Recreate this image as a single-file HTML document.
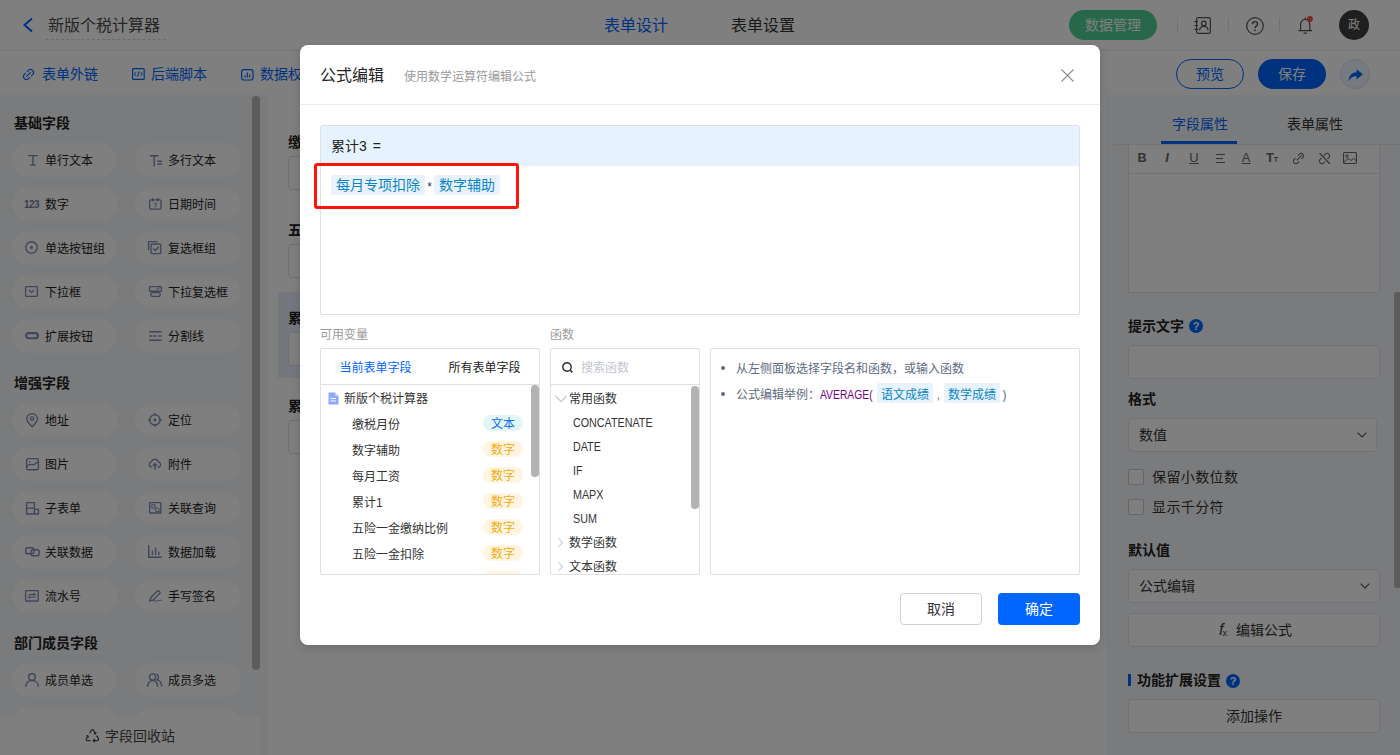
<!DOCTYPE html>
<html lang="zh-CN">
<head>
<meta charset="utf-8">
<title>公式编辑</title>
<style>
*{box-sizing:border-box;margin:0;padding:0}
html,body{width:1400px;height:755px;overflow:hidden}
body{font-family:"Liberation Sans","Noto Sans CJK SC",sans-serif;font-size:14px;color:#333;background:#fff;position:relative;line-height:1}
.abs{position:absolute}
svg{display:block;overflow:visible}
/* ---------- header ---------- */
.hdr{position:absolute;left:0;top:0;width:1400px;height:51px;background:#fff;border-bottom:1px solid #f0f0f0}
.hdr .title{position:absolute;left:48px;top:16px;font-size:16px;line-height:20px;color:#4a4a4a;white-space:nowrap}
.hdr .title-line{position:absolute;left:46px;top:39px;width:120px;border-top:1px dashed #d9d9d9}
.hdr .tab{position:absolute;top:16px;font-size:16px;line-height:20px;white-space:nowrap}
.hdr .dm{position:absolute;left:1069px;top:10px;width:88px;height:30px;border-radius:15px;background:#4cd093;color:#fff;font-size:14px;line-height:30px;text-align:center}
.hdr .sep{position:absolute;top:18px;width:1px;height:14px;background:#e4e4e4}
.hdr .ava{position:absolute;left:1339px;top:10px;width:30px;height:30px;border-radius:50%;background:#3f3f3f;color:#fff;font-size:12px;line-height:30px;text-align:center}
/* ---------- toolbar ---------- */
.tb{position:absolute;left:0;top:51px;width:1400px;height:44px;background:#fff;box-shadow:0 1px 4px rgba(0,0,0,.08)}
.tb .it{position:absolute;top:14px;font-size:14px;line-height:18px;color:#0066ff;white-space:nowrap}
.tb .ic{position:absolute;top:17px}
.tb .pv{position:absolute;left:1176px;top:8px;width:68px;height:30px;border:1px solid #0066ff;border-radius:15px;color:#0066ff;font-size:14px;line-height:28px;text-align:center}
.tb .sv{position:absolute;left:1258px;top:8px;width:68px;height:30px;border-radius:15px;background:#0066ff;color:#fff;font-size:14px;line-height:30px;text-align:center}
.tb .sh{position:absolute;left:1340px;top:8px;width:30px;height:30px;border-radius:50%;background:#eef4ff;border:1px solid #d4e0fb}
/* ---------- left panel ---------- */
.left{position:absolute;left:0;top:95px;width:268px;height:660px;background:#f5f6f8;overflow:hidden}
.left h4{position:absolute;left:14px;font-size:14px;line-height:18px;font-weight:bold;color:#222}
.pill{position:absolute;width:105px;height:34px;border-radius:17px;background:#fff;font-size:12px;line-height:34px;color:#1c1c1c;white-space:nowrap}
.pill span{position:absolute;left:33px;top:1px}
.pill svg{position:absolute}
.n123{position:absolute;left:12px;top:12.5px;font-style:normal;font-weight:bold;font-size:10px;line-height:10px;color:#6f7da6;letter-spacing:-.5px}
.c1{left:12px}.c2{left:135px}
.lsb{position:absolute;left:252px;top:1px;width:8px;height:574px;border-radius:4px;background:#b9b9b9}
.recycle{position:absolute;left:0;top:622px;width:260px;height:38px;background:#fff;font-size:14px;color:#444}
/* ---------- canvas ---------- */
.cv{position:absolute;left:268px;top:95px;width:838px;height:660px;background:#fff}
.fld{position:absolute;left:10px;width:780px;height:88px}
.fld b{font-weight:bold;position:absolute;left:10px;top:11px;font-size:14px;line-height:18px;color:#222}
.fld i{position:absolute;left:10px;top:34px;width:760px;height:34px;border:1px solid #dcdfe6;border-radius:4px;background:#fff}
/* ---------- right panel ---------- */
.rp{position:absolute;left:1106px;top:95px;width:294px;height:660px;background:#f5f6f8;overflow:hidden}
.rp .lbl{position:absolute;left:22px;font-size:14px;line-height:18px;font-weight:bold;color:#222;white-space:nowrap}
.rp .box{position:absolute;left:22px;width:252px;background:#fff;border:1px solid #e3e5ea;border-radius:4px;font-size:14px;color:#333}
.rp .q{position:absolute;width:14px;height:14px;border-radius:50%;background:#0066ff;color:#fff;font-size:11px;font-weight:bold;line-height:14px;text-align:center}
.rp .cb{position:absolute;left:22px;width:16px;height:16px;border:1px solid #c8cbd2;border-radius:2px;background:#fff}
.rp .cbl{position:absolute;left:46px;font-size:14px;line-height:18px;color:#333;white-space:nowrap;letter-spacing:.4px}
/* ---------- mask & modal ---------- */
.mask{position:absolute;left:0;top:0;width:1400px;height:755px;background:rgba(0,0,0,.5)}
.modal{position:absolute;left:300px;top:45px;width:800px;height:600px;background:#fff;border-radius:8px;overflow:hidden;box-shadow:0 3px 10px rgba(0,0,0,.16)}
.modal .mh{position:absolute;left:0;top:0;width:800px;height:60px;border-bottom:1px solid #ebebeb}
.modal .mh .t{position:absolute;left:20px;top:21px;font-size:16px;line-height:20px;color:#222}
.modal .mh .s{position:absolute;left:104px;top:24px;font-size:12px;line-height:16px;color:#9a9a9a}
.ed{position:absolute;left:20px;top:80px;width:760px;height:190px;border:1px solid #e0e0e0;border-radius:2px}
.ed .eh{position:absolute;left:0;top:0;width:758px;height:40px;background:#e6f3fe;font-size:14px;line-height:40px;padding-left:10px;color:#222}
.chip{display:inline-block;background:#e8f3fd;color:#0a86c8;border-radius:2px;padding:0 4px;height:20px;line-height:20px}
.red{position:absolute;left:14px;top:118px;width:205px;height:46px;border:3px solid #ff140a;border-radius:3px}
.sl{position:absolute;top:282px;font-size:12px;line-height:16px;color:#9a9a9a}
.bx{position:absolute;top:303px;height:227px;border:1px solid #e0e0e0;border-radius:2px;overflow:hidden;font-size:12px;color:#333}
.row{position:absolute;left:0;white-space:nowrap;line-height:16px}
.tag{position:absolute;left:162px;width:40px;height:16px;border-radius:8px;font-size:12px;line-height:18px;text-align:center;overflow:hidden}
.tn{background:#fff5e0;color:#f5ab12}
.tt{background:#e2f6f7;color:#1470e8}
.sb{position:absolute;width:8px;border-radius:4px;background:#b3b3b3}
.btn{position:absolute;top:548px;width:82px;height:32px;border-radius:4px;font-size:14px;line-height:30px;text-align:center}

.fl{position:absolute;left:10px;top:49px;height:20px;line-height:20px;font-size:14px;white-space:nowrap}
.fl .chip{padding:0 5px}
.op{position:relative;top:1px;display:inline-block;width:9px;text-align:center;font-size:12px;color:#333;font-family:"Liberation Mono",monospace}
.vt{position:absolute;left:0;top:0;width:218px;height:36px;border-bottom:1px solid #e0e0e0}
.vt span{position:absolute;top:1px;width:109px;text-align:center;line-height:36px;font-size:12px;color:#222}
.fs{position:absolute;left:0;top:0;width:148px;height:36px;border-bottom:1px solid #e0e0e0}
.fs span{position:absolute;left:30px;top:11px;font-size:12px;line-height:16px;color:#c3c7ce}
.fn{left:22px;color:#333;transform:scaleX(.895);transform-origin:0 50%}
.dot{position:absolute;left:10px;width:4px;height:4px;border-radius:50%;background:#5e6b80}
.kw{color:#770088;display:inline-block;width:53px}.kw b{font-weight:normal;display:inline-block;transform:scaleX(.86);transform-origin:0 50%}
.c12{padding:0 4px;vertical-align:top;line-height:24px}
.cm{display:inline-block;width:11px;text-align:center;color:#5e6b80}

.rtab{position:absolute;top:20px;font-size:14px;line-height:18px;white-space:nowrap}
.rt{position:absolute;top:5px;width:16px;text-align:center;font-size:13px;line-height:16px;color:#666}
.bt{position:absolute;left:10px;top:7px;line-height:18px;white-space:nowrap}
</style>
</head>
<body>
<!-- HEADER -->
<div class="hdr">
  <svg class="abs" style="left:22px;top:17px" width="12" height="16" viewBox="0 0 12 16"><path d="M10 1.5 L2.5 8 L10 14.5" fill="none" stroke="#0066ff" stroke-width="2"/></svg>
  <div class="title">新版个税计算器</div>
  <div class="title-line"></div>
  <div class="tab" style="left:604px;color:#0066ff">表单设计</div>
  <div class="tab" style="left:731px;color:#333">表单设置</div>
  <div class="dm">数据管理</div>
  <div class="sep" style="left:1177px"></div>
  <div class="sep" style="left:1228px"></div>
  <div class="sep" style="left:1279px"></div>
  <svg class="abs" style="left:1194px;top:17px" width="17" height="17" viewBox="0 0 17 17" fill="none" stroke="#555" stroke-width="1.2"><rect x="2.6" y="0.6" width="13.8" height="15.8" rx="1.6"/><path d="M0.4 4.6H4M0.4 8.5H4M0.4 12.4H4"/><circle cx="9.8" cy="6.4" r="2.3"/><path d="M5.6 13.4C5.6 10.6 7.4 9.4 9.8 9.4C12.2 9.4 14 10.6 14 13.4"/></svg>
  <svg class="abs" style="left:1246px;top:16.5px" width="18" height="18" viewBox="0 0 18 18" fill="none" stroke="#555" stroke-width="1.2"><circle cx="9" cy="9" r="8.3"/><path d="M6.4 7.2C6.4 5.4 7.6 4.6 9 4.6C10.4 4.6 11.6 5.5 11.6 7C11.6 8.8 9 9 9 11.2" stroke-width="1.4"/><circle cx="9" cy="13.3" r="0.9" fill="#555" stroke="none"/></svg>
  <svg class="abs" style="left:1298px;top:17px" width="15" height="17" viewBox="0 0 15 17" fill="none" stroke="#555" stroke-width="1.2"><path d="M7.2 0.4V2M0.4 13.6H14M2.6 13.4V7.4A4.6 5 0 0 1 11.8 7.4V13.4M5.6 16.2H8.8"/><circle cx="11.9" cy="2.1" r="3" fill="#ff4d4f" stroke="none"/></svg>
  <div class="ava">政</div>
</div>
<!-- TOOLBAR -->
<div class="tb">
  <svg class="abs" style="left:22px;top:16.6px" width="13" height="13" viewBox="0 0 13 13" fill="none" stroke="#0066ff" stroke-width="1.15" stroke-linecap="round"><path d="M4.6 8.4L8.4 4.6"/><path d="M5.3 3.5L6.7 2.1A3 3 0 0 1 10.9 6.3L9.5 7.7"/><path d="M7.7 9.5L6.3 10.9A3 3 0 0 1 2.1 6.7L3.5 5.3"/></svg>
  <svg class="abs" style="left:131.5px;top:17px" width="13" height="12" viewBox="0 0 13 12" fill="none" stroke="#0066ff" stroke-width="1.2"><rect x="0.6" y="0.6" width="11.6" height="10.8" rx="1"/><path d="M4.2 4L2.4 6L4.2 8M8.6 4L10.4 6L8.6 8M7.2 3.4L5.6 8.6" stroke-width="1"/></svg>
  <svg class="abs" style="left:241px;top:17.6px" width="13" height="12" viewBox="0 0 13 12" fill="none" stroke="#0066ff" stroke-width="1.2"><rect x="0.6" y="0.6" width="11.4" height="10.4" rx="2.2"/><path d="M4 8.4V6.4M6.3 8.4V3.6M8.6 8.4V5.4" stroke-width="1.2"/></svg>
  <div class="it" style="left:42px">表单外链</div>
  <div class="it" style="left:151px">后端脚本</div>
  <div class="it" style="left:260px">数据权限</div>
  <div class="pv">预览</div>
  <div class="sv">保存</div>
  <div class="sh"><svg class="abs" style="left:6.5px;top:8.5px" width="15" height="13" viewBox="0 0 15 13"><path d="M8.6 0.2L14.8 5.2L8.6 10.4V7.2C4.6 7.2 2.2 8.8 0.6 12.6C0.6 7 3.4 3.4 8.6 3.2Z" fill="#0066ff"/></svg></div>
</div>
<!-- LEFT PANEL -->
<div class="left">
  <h4 style="top:19px">基础字段</h4>
  <div class="pill c1" style="top:48px"><svg style="left:16px;top:12.3px" width="10" height="10.8" viewBox="0 0 10 10.8" fill="none" stroke="#7f8cb2" stroke-width="1.45"><path d="M0 0.65H10M2 10.15H8M5 0.6V10.2"/></svg><span>单行文本</span></div>
  <div class="pill c2" style="top:48px"><svg style="left:14.5px;top:11.7px" width="12" height="11.5" viewBox="0 0 12 11.5" fill="none" stroke="#7f8cb2" stroke-width="1.45"><path d="M0 0.7H8.4M4.2 0.7V11.5M7.2 6.2H12M7.2 9H12"/></svg><span>多行文本</span></div>
  <div class="pill c1" style="top:92px"><em class="n123">123</em><span>数字</span></div>
  <div class="pill c2" style="top:92px"><svg style="left:14px;top:11px" width="12.6" height="11.8" viewBox="0 0 12.6 11.8" fill="none" stroke="#7f8cb2" stroke-width="1.35"><rect x="0.6" y="1.8" width="11.4" height="9.4" rx="1.6"/><path d="M3.6 0V3.4M9 0V3.4" /><path d="M4.6 5.6H7.8L6 9.4" stroke-width="1"/></svg><span>日期时间</span></div>
  <div class="pill c1" style="top:136px"><svg style="left:13px;top:10px" width="13" height="13" viewBox="0 0 13 13" fill="none" stroke="#7f8cb2" stroke-width="1.35"><circle cx="6.5" cy="6.5" r="5.8"/><circle cx="6.5" cy="6.5" r="1.4" fill="#7f8cb2" stroke="none"/></svg><span>单选按钮组</span></div>
  <div class="pill c2" style="top:136px"><svg style="left:13.2px;top:10px" width="13.4" height="13.2" viewBox="0 0 13.4 13.2" fill="none" stroke="#7f8cb2" stroke-width="1.35"><path d="M0.6 9.6V0.6H9.8"/><rect x="3" y="3" width="9.8" height="9.6" rx="1"/><path d="M5.4 7.6L7.4 9.6L10.6 5.8"/></svg><span>复选框组</span></div>
  <div class="pill c1" style="top:180px"><svg style="left:13.4px;top:11px" width="13" height="11" viewBox="0 0 13 11" fill="none" stroke="#7f8cb2" stroke-width="1.35"><rect x="0.6" y="0.6" width="11.8" height="9.8" rx="0.8"/><path d="M4 4L6.5 6.6L9 4"/></svg><span>下拉框</span></div>
  <div class="pill c2" style="top:180px"><svg style="left:13.6px;top:10.8px" width="13" height="11" viewBox="0 0 13 11" fill="none" stroke="#7f8cb2" stroke-width="1.35"><rect x="0.6" y="0.6" width="11.8" height="4.6" rx="0.8"/><path d="M7.2 2.4L8.6 3.8L11 1.2" stroke-width="1"/><rect x="1.8" y="6.6" width="9.4" height="3.8" rx="1.6"/></svg><span>下拉复选框</span></div>
  <div class="pill c1" style="top:224px"><svg style="left:13px;top:13.2px" width="14" height="7.4" viewBox="0 0 14 7.4" fill="none" stroke="#7f8cb2" stroke-width="2.1"><rect x="1.1" y="1.1" width="11.8" height="5.2" rx="2.6"/></svg><span>扩展按钮</span></div>
  <div class="pill c2" style="top:224px"><svg style="left:14px;top:12px" width="12.6" height="10" viewBox="0 0 12.6 10" fill="none" stroke="#7f8cb2" stroke-width="1.45"><path d="M0 0.7H12.6M0 9.3H12.6"/><path d="M0 5H12.6" stroke-dasharray="3.4 1.2"/></svg><span>分割线</span></div>
  <h4 style="top:279px">增强字段</h4>
  <div class="pill c1" style="top:308px"><svg style="left:14px;top:9.8px" width="12.2" height="14.6" viewBox="0 0 12.2 14.6" fill="none" stroke="#7f8cb2" stroke-width="1.35"><path d="M6.1 13.8C2.6 10.4 0.7 8.2 0.7 5.8A5.4 5.2 0 0 1 11.5 5.8C11.5 8.2 9.6 10.4 6.1 13.8Z"/><circle cx="6.1" cy="5.6" r="1.7"/></svg><span>地址</span></div>
  <div class="pill c2" style="top:308px"><svg style="left:13.2px;top:9.8px" width="13.8" height="13.8" viewBox="0 0 13.8 13.8" fill="none" stroke="#7f8cb2" stroke-width="1.35"><circle cx="6.9" cy="6.9" r="5.2"/><circle cx="6.9" cy="6.9" r="1.3" fill="#7f8cb2" stroke="none"/><path d="M6.9 0V3M6.9 10.8V13.8M0 6.9H3M10.8 6.9H13.8"/></svg><span>定位</span></div>
  <div class="pill c1" style="top:352px"><svg style="left:13.6px;top:10.6px" width="13" height="12.4" viewBox="0 0 13 12.4" fill="none" stroke="#7f8cb2" stroke-width="1.35"><rect x="0.6" y="0.6" width="11.8" height="11.2" rx="1.4"/><circle cx="3.6" cy="3.8" r="0.9" fill="#7f8cb2" stroke="none"/><path d="M0.8 8.4C3 6.2 4.4 6 6 6.6C8 7.2 10 5.4 12.2 3.6"/></svg><span>图片</span></div>
  <div class="pill c2" style="top:352px"><svg style="left:13.2px;top:12px" width="13.8" height="10.8" viewBox="0 0 13.8 10.8" fill="none" stroke="#7f8cb2" stroke-width="1.35"><path d="M4.2 8.2H3.4A2.8 2.8 0 0 1 3.2 2.8A3.9 3.9 0 0 1 10.6 3.2A2.6 2.6 0 0 1 10.8 8.2H9.6"/><path d="M6.9 10.8V5M4.9 6.8L6.9 4.8L8.9 6.8"/></svg><span>附件</span></div>
  <div class="pill c1" style="top:396px"><svg style="left:14px;top:10.6px" width="13" height="12.6" viewBox="0 0 13 12.6" fill="none" stroke="#7f8cb2" stroke-width="1.35"><path d="M0.6 0.6H8.4V12H0.6ZM0.6 6.2H8.4M8.4 7.4H12.4V12H8.4"/></svg><span>子表单</span></div>
  <div class="pill c2" style="top:396px"><svg style="left:14px;top:11px" width="12.8" height="12" viewBox="0 0 12.8 12" fill="none" stroke="#7f8cb2" stroke-width="1.35"><rect x="0.6" y="0.6" width="11.2" height="10.4" rx="0.6"/><rect x="2.8" y="2.8" width="3.2" height="3.2" stroke-width="1"/><circle cx="8.2" cy="7.8" r="1.9" stroke-width="1"/><path d="M9.6 9.2L12 11.6" stroke-width="1.1"/><path d="M6 6L6.9 6.6" stroke-width="1"/></svg><span>关联查询</span></div>
  <div class="pill c1" style="top:440px"><svg style="left:12.6px;top:12px" width="14.8" height="9.4" viewBox="0 0 14.8 9.4" fill="none" stroke="#7f8cb2" stroke-width="1.45"><rect x="0.7" y="0.7" width="8" height="6" rx="1.8"/><rect x="6.1" y="2.7" width="8" height="6" rx="1.8"/></svg><span>关联数据</span></div>
  <div class="pill c2" style="top:440px"><svg style="left:13.2px;top:10px" width="13.8" height="13" viewBox="0 0 13.8 13" fill="none" stroke="#7f8cb2" stroke-width="1.45"><path d="M0.7 0V12.3H13.8"/><path d="M4.4 10.2V5.6M7.6 10.2V2.4M10.8 10.2V6.6" stroke-width="1.4"/></svg><span>数据加载</span></div>
  <div class="pill c1" style="top:484px"><svg style="left:13.2px;top:11px" width="13.8" height="11.6" viewBox="0 0 13.8 11.6" fill="none" stroke="#7f8cb2" stroke-width="1.35"><rect x="0.6" y="0.6" width="12.6" height="10.4" rx="0.6"/><path d="M3.4 4.6H10.2L8.6 3M10.4 7H3.6L5.2 8.6" stroke-width="1.1"/></svg><span>流水号</span></div>
  <div class="pill c2" style="top:484px"><svg style="left:13.8px;top:11px" width="13" height="11.8" viewBox="0 0 13 11.8" fill="none" stroke="#7f8cb2" stroke-width="1.35"><path d="M1.8 7.6L8.4 1A1 1 0 0 1 9.8 1L10.8 2A1 1 0 0 1 10.8 3.4L4.2 10L1 10.8Z"/><path d="M0.4 11.2C4 9.6 6 11.6 8 11C9.6 10.6 10.8 10 12.8 10.4" stroke-width="1"/></svg><span>手写签名</span></div>
  <h4 style="top:539px">部门成员字段</h4>
  <div class="pill c1" style="top:568px"><svg style="left:13.2px;top:10.4px" width="14" height="13.8" viewBox="0 0 14 13.8" fill="none" stroke="#7f8cb2" stroke-width="1.45"><circle cx="7" cy="4" r="3.3"/><path d="M0.7 13.8C0.7 10 3.4 7.6 7 7.6C10.6 7.6 13.3 10 13.3 13.8"/></svg><span>成员单选</span></div>
  <div class="pill c2" style="top:568px"><svg style="left:12.2px;top:10.4px" width="15.2" height="13.8" viewBox="0 0 15.2 13.8" fill="none" stroke="#7f8cb2" stroke-width="1.35"><circle cx="5.6" cy="4" r="3.1"/><path d="M0.6 13.8C0.6 10 2.6 7.6 5.6 7.6C8.6 7.6 10.6 10 10.6 13.8"/><path d="M9.4 1.2A3 3 0 0 1 9.8 6.8C12.6 7.2 14.6 9.6 14.6 13.4" /></svg><span>成员多选</span></div>
  <div class="pill c1" style="top:612px"><span>部门单选</span></div>
  <div class="pill c2" style="top:612px"><span>部门多选</span></div>
  <div class="lsb"></div>
  <div class="recycle"><svg class="abs" style="left:84.5px;top:11.5px" width="15" height="14" viewBox="0 0 15 14" fill="none" stroke="#444" stroke-width="1.2"><path d="M4.6 4.2L6.4 1.2Q7.4 -0.2 8.4 1.2L10.4 4.4"/><path d="M11.6 6.6L13.4 9.6Q14 11.6 12 11.6H8.4"/><path d="M5.4 11.6H2.6Q0.6 11.6 1.4 9.6L2.8 7.2"/><path d="M8.8 4.6L10.6 4.8L11 3" stroke-width="1.1"/><path d="M9.8 10L8.2 11.6L9.8 13.2" stroke-width="1.1"/><path d="M1.4 6.6L3 6.8L3.4 8.6" stroke-width="1.1"/></svg><span class="abs" style="left:105px;top:10px;line-height:18px">字段回收站</span></div>
</div>
<!-- CANVAS -->
<div class="cv">
  <div class="fld" style="top:27px"><b>缴税月份</b><i></i></div>
  <div class="fld" style="top:115px"><b>五险一金扣除</b><i></i></div>
  <div class="fld" style="top:197px;height:86px;background:#e8effc"><b style="top:17px">累计3</b><i style="top:40px"></i></div>
  <div class="fld" style="top:291px"><b>累计4</b><i></i></div>
</div>
<!-- RIGHT PANEL -->
<div class="rp">
  <div class="rtab" style="left:66px;color:#0066ff">字段属性</div>
  <div class="rtab" style="left:181px;color:#333">表单属性</div>
  <div class="abs" style="left:8px;top:49px;width:286px;height:1px;background:#e6e6e6"></div>
  <div class="abs" style="left:55px;top:46px;width:76px;height:3px;background:#0066ff"></div>
  <!-- rich text -->
  <div class="box" style="top:50px;height:148px;border-top:none;border-radius:0 0 2px 2px">
    <div class="abs" style="left:0;top:28px;width:250px;height:1px;background:#e6e6e6"></div>
    <div class="rt" style="left:5px;font-weight:bold;font-size:12.5px">B</div>
    <div class="rt" style="left:30px;font-style:italic;font-weight:bold">I</div>
    <div class="rt" style="left:57px;text-decoration:underline">U</div>
    <svg class="abs" style="left:87px;top:9px" width="9" height="9" viewBox="0 0 9 9"><path d="M0 0.5H9M0 4.5H7M0 8.5H9" stroke="#666" stroke-width="1"/></svg>
    <div class="rt" style="left:109px;text-decoration:underline">A</div>
    <div class="rt" style="left:135px;font-weight:bold">T<span style="font-size:7px">T</span></div>
    <svg class="abs" style="left:163px;top:7px" width="13" height="13" viewBox="0 0 13 13"><path d="M5.2 7.8 L9.6 3.4 M6.3 3.2 L7.6 1.9 A2.5 2.5 0 0 1 11.1 5.4 L9.8 6.7 M6.7 9.8 L5.4 11.1 A2.5 2.5 0 0 1 1.9 7.6 L3.2 6.3" fill="none" stroke="#666" stroke-width="1.1" stroke-linecap="round"/></svg>
    <svg class="abs" style="left:189px;top:7px" width="13" height="13" viewBox="0 0 13 13"><path d="M6.3 3.2 L7.6 1.9 A2.5 2.5 0 0 1 11.1 5.4 L9.8 6.7 M6.7 9.8 L5.4 11.1 A2.5 2.5 0 0 1 1.9 7.6 L3.2 6.3 M2 1.5 L11.5 11.5" fill="none" stroke="#666" stroke-width="1.1" stroke-linecap="round"/></svg>
    <svg class="abs" style="left:214px;top:7px" width="14" height="12" viewBox="0 0 14 12"><rect x="0.55" y="0.55" width="12.9" height="10.9" rx="1.2" fill="none" stroke="#666" stroke-width="1.1"/><circle cx="4" cy="4" r="1.2" fill="none" stroke="#666" stroke-width="1"/><path d="M1 10 L5 6.5 L8 8.5 L10.5 6.5 L13 8.5" fill="none" stroke="#666" stroke-width="1"/></svg>
  </div>
  <div class="lbl" style="top:222px">提示文字</div>
  <div class="q" style="left:83px;top:224px">?</div>
  <div class="box" style="top:250px;height:34px"></div>
  <div class="lbl" style="top:295px">格式</div>
  <div class="box" style="top:323px;height:34px;width:249px"><span class="bt">数值</span>
    <svg class="abs" style="left:228px;top:13px" width="10" height="6" viewBox="0 0 10 6"><path d="M0.6 0.6 L5 5 L9.4 0.6" fill="none" stroke="#555" stroke-width="1.1"/></svg></div>
  <div class="cb" style="top:374px"></div><div class="cbl" style="top:373px">保留小数位数</div>
  <div class="cb" style="top:404px"></div><div class="cbl" style="top:403px">显示千分符</div>
  <div class="lbl" style="top:446px">默认值</div>
  <div class="box" style="top:474px;height:34px"><span class="bt">公式编辑</span>
    <svg class="abs" style="left:231px;top:13px" width="10" height="6" viewBox="0 0 10 6"><path d="M0.6 0.6 L5 5 L9.4 0.6" fill="none" stroke="#555" stroke-width="1.1"/></svg></div>
  <div class="box" style="top:518px;height:34px"><span class="bt" style="left:107px">编辑公式</span>
    <span class="abs" style="left:90px;top:7px;font-style:italic;font-size:16px;line-height:18px;color:#3c3c3c;letter-spacing:-1px;white-space:nowrap">f<span style="font-size:9px;font-style:normal;position:relative;top:1px">x</span></span></div>
  <div class="abs" style="left:22px;top:579px;width:3px;height:12px;background:#0066ff"></div>
  <div class="lbl" style="left:31px;top:576px">功能扩展设置</div>
  <div class="q" style="left:120px;top:579px">?</div>
  <div class="box" style="top:604px;height:34px"><span class="bt" style="left:97px">添加操作</span></div>
  <div class="abs" style="left:288px;top:197px;width:6px;height:296px;border-radius:3px 0 0 3px;background:#b9b9b9"></div>
</div>
<!-- MASK + MODAL -->
<div class="mask"></div>
<div class="modal">
  <div class="mh">
    <div class="t">公式编辑</div>
    <div class="s">使用数学运算符编辑公式</div>
    <svg class="abs" style="left:761px;top:24px" width="13" height="13" viewBox="0 0 13 13"><path d="M0.5 0.5 L12.5 12.5 M12.5 0.5 L0.5 12.5" stroke="#8c8c8c" stroke-width="1.1" fill="none"/></svg>
  </div>
  <div class="ed">
    <div class="eh" style="word-spacing:2px">累计3 =</div>
    <div class="fl"><span class="chip">每月专项扣除</span><span class="op">*</span><span class="chip">数字辅助</span></div>
  </div>
  <div class="red"></div>
  <div class="sl" style="left:20px">可用变量</div>
  <div class="sl" style="left:250px">函数</div>
  <!-- variables -->
  <div class="bx" style="left:20px;width:220px">
    <div class="vt">
      <span style="left:0;color:#0066ff">当前表单字段</span><span style="left:109px">所有表单字段</span>
    </div>
    <svg class="abs" style="left:7px;top:43px" width="11" height="13" viewBox="0 0 11 13"><path d="M0.5 0.5 H7 L10.5 4 V12.5 H0.5 Z" fill="#8fa6ff"/><path d="M7 0.5 V4 H10.5 Z" fill="#c9d4ff"/><path d="M2.5 6.5 H8 M2.5 9 H8" stroke="#fff" stroke-width="1"/></svg>
    <div class="row" style="left:23px;top:42px">新版个税计算器</div>
    <div class="row" style="left:31px;top:68px">缴税月份</div><div class="tag tt" style="top:66px">文本</div>
    <div class="row" style="left:31px;top:94px">数字辅助</div><div class="tag tn" style="top:92px">数字</div>
    <div class="row" style="left:31px;top:120px">每月工资</div><div class="tag tn" style="top:118px">数字</div>
    <div class="row" style="left:31px;top:146px">累计1</div><div class="tag tn" style="top:144px">数字</div>
    <div class="row" style="left:31px;top:172px">五险一金缴纳比例</div><div class="tag tn" style="top:170px">数字</div>
    <div class="row" style="left:31px;top:198px">五险一金扣除</div><div class="tag tn" style="top:196px">数字</div>
    <div class="row" style="left:31px;top:224px">累计2</div><div class="tag tn" style="top:222px;line-height:26px">数字</div>
    <div class="sb" style="left:210px;top:36px;height:92px"></div>
  </div>
  <!-- functions -->
  <div class="bx" style="left:250px;width:150px">
    <div class="fs">
      <svg class="abs" style="left:10.5px;top:13px" width="11" height="11" viewBox="0 0 11 11"><circle cx="5" cy="5" r="4.2" fill="none" stroke="#2a2a2a" stroke-width="1.4"/><path d="M8 8 L10.4 10.4" stroke="#2a2a2a" stroke-width="1.5"/></svg>
      <span>搜索函数</span>
    </div>
    <svg class="abs" style="left:3.5px;top:45.5px" width="12" height="8" viewBox="0 0 12 8"><path d="M0.5 0.8 L6 6.6 L11.5 0.8" fill="none" stroke="#bcc6da" stroke-width="1.2"/></svg>
    <div class="row" style="left:18px;top:42px">常用函数</div>
    <div class="row fn" style="top:66px">CONCATENATE</div>
    <div class="row fn" style="top:90px">DATE</div>
    <div class="row fn" style="top:114px">IF</div>
    <div class="row fn" style="top:138px">MAPX</div>
    <div class="row fn" style="top:162px">SUM</div>
    <svg class="abs" style="left:7px;top:189px" width="5" height="9" viewBox="0 0 5 9"><path d="M0.7 0.5 L4.3 4.5 L0.7 8.5" fill="none" stroke="#bcc6da" stroke-width="1.1"/></svg>
    <div class="row" style="left:18px;top:186px">数学函数</div>
    <svg class="abs" style="left:7px;top:213px" width="5" height="9" viewBox="0 0 5 9"><path d="M0.7 0.5 L4.3 4.5 L0.7 8.5" fill="none" stroke="#bcc6da" stroke-width="1.1"/></svg>
    <div class="row" style="left:18px;top:210px">文本函数</div>
    <div class="sb" style="left:140px;top:37px;height:123px"></div>
  </div>
  <!-- help -->
  <div class="bx" style="left:410px;width:370px;color:#5e6b80">
    <i class="dot" style="top:17px"></i>
    <div class="row" style="left:25px;top:12px">从左侧面板选择字段名和函数，或输入函数</div>
    <i class="dot" style="top:43px"></i>
    <div class="row" style="left:25px;top:34px;line-height:24px">公式编辑举例：<span class="kw"><b>AVERAGE(</b></span><span class="chip c12" style="margin-left:4px">语文成绩</span><span class="cm">,</span><span class="chip c12">数学成绩</span><span class="cm" style="width:9px">)</span></div>
  </div>
  <div class="btn" style="left:600px;border:1px solid #d0d0d0;color:#333;background:#fff">取消</div>
  <div class="btn" style="left:698px;background:#0066ff;color:#fff;line-height:32px">确定</div>
</div>
</body>
</html>
